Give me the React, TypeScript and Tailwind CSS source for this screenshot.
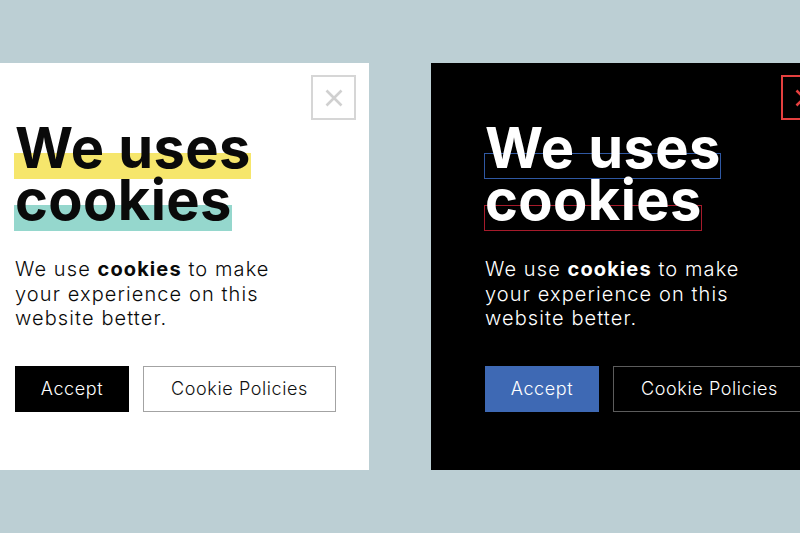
import React from "react";

type Variant = "light" | "dark";

const styles = {
  light: {
    card: "bg-white text-[#0a0a0a]",
    close: "border-[#d6d6d6] text-[#d0d0d0]",
    bar1: "bg-[#f6e66c]",
    bar2: "bg-[#95d7cd]",
    accept: "bg-black text-white",
    policies: "border-[#a3a3a3] text-[#111]",
  },
  dark: {
    card: "bg-black text-white",
    close: "border-[#e5403f] text-[#e5403f]",
    bar1: "border border-[#2f58a3]",
    bar2: "border border-[#a61b2b]",
    accept: "bg-[#3e69b4] text-white",
    policies: "border-[#5c5c5c] text-white",
  },
} as const;

function CloseBox({ className }: { className: string }) {
  return (
    <button
      className={`flex size-[45px] shrink-0 items-center justify-center self-end border-2 ${className}`}
    >
      <svg width="18" height="18" viewBox="0 0 18 18" fill="none">
        <path
          d="M1.5 1.5 L16.5 16.5 M16.5 1.5 L1.5 16.5"
          stroke="currentColor"
          strokeWidth="2.6"
        />
      </svg>
    </button>
  );
}

function MarkedLine({ text, bar }: { text: string; bar: string }) {
  return (
    <div>
      <span className="relative isolate inline-block">
        <span
          className={`absolute -left-px right-0 bottom-[-5px] -z-10 h-[26px] ${bar}`}
        />
        {text}
      </span>
    </div>
  );
}

function CookieCard({ variant }: { variant: Variant }) {
  const s = styles[variant];
  return (
    <div
      className={`flex h-[407px] w-[408px] shrink-0 flex-col pl-[54px] pr-[13px] pt-3 ${s.card}`}
    >
      <CloseBox className={s.close} />
      <h1 className="mt-[2px] text-[56px] font-bold leading-[52px] tracking-[0.4px]">
        <MarkedLine text="We uses" bar={s.bar1} />
        <MarkedLine text="cookies" bar={s.bar2} />
      </h1>
      <p className="mt-[31px] w-[275px] text-[20px] font-light leading-[24.5px] tracking-[1.1px]">
        We use <strong className="font-bold">cookies</strong> to make your
        experience on this website better.
      </p>
      <div className="mt-[35px] flex gap-[14px]">
        <button
          className={`h-[46px] w-[114px] text-[18px] font-light tracking-[0.6px] ${s.accept}`}
        >
          Accept
        </button>
        <button
          className={`h-[46px] w-[193px] border text-[18px] font-light tracking-[0.6px] ${s.policies}`}
        >
          Cookie Policies
        </button>
      </div>
    </div>
  );
}

export default function App() {
  return (
    <main className="h-[533px] w-[800px] overflow-hidden bg-[#bccfd4] pt-[63px] font-['Inter',sans-serif]">
      <div className="-ml-[39px] flex gap-[62px]">
        <CookieCard variant="light" />
        <CookieCard variant="dark" />
      </div>
    </main>
  );
}
